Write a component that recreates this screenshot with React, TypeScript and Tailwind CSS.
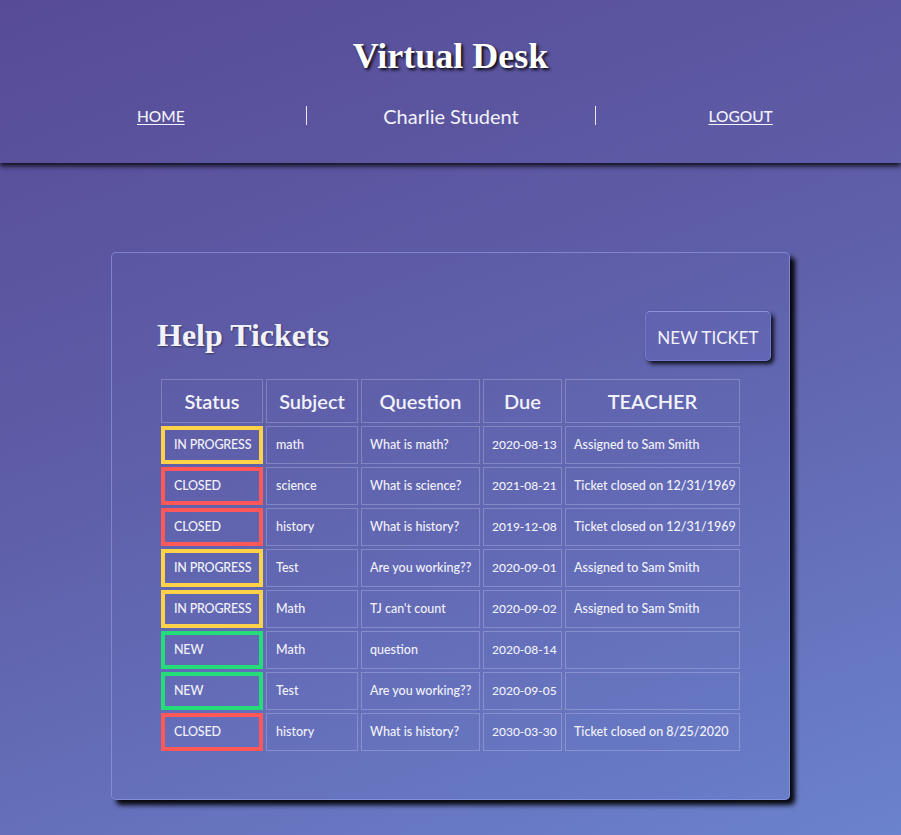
import React from "react";

type Row = { status: "IN PROGRESS" | "CLOSED" | "NEW"; subject: string; question: string; due: string; teacher: string };

const rows: Row[] = [
  { status: "IN PROGRESS", subject: "math", question: "What is math?", due: "2020-08-13", teacher: "Assigned to Sam Smith" },
  { status: "CLOSED", subject: "science", question: "What is science?", due: "2021-08-21", teacher: "Ticket closed on 12/31/1969" },
  { status: "CLOSED", subject: "history", question: "What is history?", due: "2019-12-08", teacher: "Ticket closed on 12/31/1969" },
  { status: "IN PROGRESS", subject: "Test", question: "Are you working??", due: "2020-09-01", teacher: "Assigned to Sam Smith" },
  { status: "IN PROGRESS", subject: "Math", question: "TJ can't count", due: "2020-09-02", teacher: "Assigned to Sam Smith" },
  { status: "NEW", subject: "Math", question: "question", due: "2020-08-14", teacher: "" },
  { status: "NEW", subject: "Test", question: "Are you working??", due: "2020-09-05", teacher: "" },
  { status: "CLOSED", subject: "history", question: "What is history?", due: "2030-03-30", teacher: "Ticket closed on 8/25/2020" },
];

const statusBorder: Record<Row["status"], string> = {
  "IN PROGRESS": "border-[#ffd24a]",
  CLOSED: "border-[#ff5858]",
  NEW: "border-[#24dc78]",
};

const sans = { fontFamily: "Lato, 'Noto Sans', sans-serif" };
const serif = { fontFamily: "'Liberation Serif', 'Times New Roman', serif" };

const cell = "h-[38px] border border-[rgba(255,255,255,0.22)] whitespace-nowrap overflow-hidden";

export default function App() {
  return (
    <div
      className="min-h-[835px] w-full bg-[linear-gradient(160deg,#574b97_0%,#5f5ea8_45%,#6b82cd_100%)] text-[#f2f2fa]"
      style={sans}
    >
      <header className="h-[163px] shadow-[0_3px_5px_rgba(0,0,0,0.85)] flex flex-col items-center">
        <h1
          className="mt-[36px] text-[36px] leading-[40px] font-bold text-white [text-shadow:2px_2px_3px_rgba(0,0,0,0.9)]"
          style={serif}
        >
          Virtual Desk
        </h1>
        <nav className="mt-[30px] w-full px-[16px] grid grid-cols-3">
          <div className="flex items-center justify-center h-[19px]">
            <a className="underline text-[15.5px] leading-[20px] underline-offset-2 font-medium">HOME</a>
          </div>
          <div className="flex items-center justify-center h-[19px] border-l border-[#e8e8f4]">
            <span className="text-[20px] leading-[20px]">Charlie Student</span>
          </div>
          <div className="flex items-center justify-center h-[19px] border-l border-[#e8e8f4]">
            <a className="underline text-[15.5px] leading-[20px] underline-offset-2 font-medium">LOGOUT</a>
          </div>
        </nav>
      </header>

      <main className="pt-[89px] pb-[35px]">
        <section className="mx-auto w-[679px] h-[548px] rounded-[5px] bg-[rgba(110,120,210,0.06)] border border-[rgba(150,160,240,0.6)] shadow-[5px_5px_5px_rgba(0,0,0,0.95)] flex flex-col">
          <div className="flex items-center justify-between pl-[45px] pr-[18px] pt-[58px]">
            <h2 className="text-[32px] leading-[36px] font-bold mt-[-2px] [text-shadow:1px_1px_2px_rgba(0,0,0,0.4)]" style={serif}>
              Help Tickets
            </h2>
            <button className="w-[126px] h-[50px] pt-[3px] rounded-[5px] border border-[rgba(150,160,240,0.35)] border-t-[rgba(160,170,245,0.7)] bg-[rgba(100,105,190,0.25)] shadow-[3px_3px_4px_rgba(0,0,0,0.85)] text-[17px] text-[#f2f2fa]">
              NEW TICKET
            </button>
          </div>
          <div className="flex justify-center mt-[15px]">
            <table className="table-fixed border-separate border-spacing-[3px] w-[585px]">
              <colgroup>
                <col className="w-[102px]" />
                <col className="w-[92px]" />
                <col className="w-[119px]" />
                <col className="w-[79px]" />
                <col className="w-[175px]" />
              </colgroup>
              <thead>
                <tr>
                  {["Status", "Subject", "Question", "Due", "TEACHER"].map((t) => (
                    <th
                      key={t}
                      className="h-[44px] border border-[rgba(255,255,255,0.22)] text-[20px] font-semibold text-center"
                    >
                      {t}
                    </th>
                  ))}
                </tr>
              </thead>
              <tbody>
                {rows.map((r, i) => (
                  <tr key={i} className="text-[12.5px] font-medium">
                    <td className={`h-[38px] border-4 ${statusBorder[r.status]} pl-[9px] whitespace-nowrap text-[12.5px] tracking-[-0.2px]`}>{r.status}</td>
                    <td className={`${cell} pl-[9px]`}>{r.subject}</td>
                    <td className={`${cell} pl-[8px]`}>{r.question}</td>
                    <td className={`${cell} pl-[8px] text-[12px]`}>{r.due}</td>
                    <td className={`${cell} pl-[8px]`}>{r.teacher}</td>
                  </tr>
                ))}
              </tbody>
            </table>
          </div>
        </section>
      </main>
    </div>
  );
}
